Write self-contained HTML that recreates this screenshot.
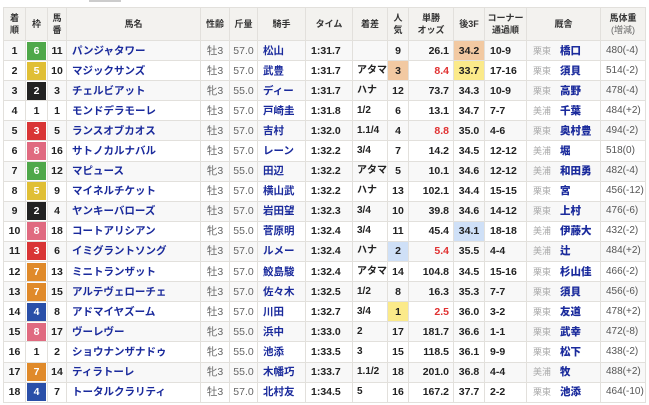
<!DOCTYPE html>
<html><head><meta charset="utf-8"><style>
*{margin:0;padding:0;box-sizing:border-box}
body{width:649px;height:405px;background:#fff;overflow:hidden;font-family:"Liberation Sans","Noto Sans CJK JP",sans-serif;color:#222;position:relative}
.tab{position:absolute;left:89px;top:0;width:32px;height:2px;background:#ccc}
table{position:absolute;left:3px;top:7px;width:643px;border-collapse:collapse;table-layout:fixed;font-size:10.5px}
td,th{border:1px solid #e2e0dc;padding:0;text-align:center;white-space:nowrap;overflow:hidden}
th{background:#f3f2ef;font-size:9px;font-weight:bold;color:#333;line-height:12px;height:33px}
th small{font-weight:normal;color:#666;font-size:9px}
tr.r{height:20.1px}
tr.r td{height:20.1px}
tr.r:nth-child(even) td{background:#f8f8f8}
td{font-weight:bold;line-height:14px}
td.n{text-align:left;padding-left:5px;color:#1a2a9c}
td.g{color:#666;font-weight:normal}
td.j{text-align:left;padding-left:5px;color:#1a2a9c}
td.l{text-align:left;padding-left:5px}
td.k{text-align:left;padding-left:4px;font-size:10px}
td.rt{text-align:right;padding-right:4px}
td.red{color:#e03030}
td.w{text-align:left;padding-left:5px;color:#555;font-weight:normal;font-size:10px}
td.s{text-align:left;padding-left:6px}
td.s span{color:#aaa;font-weight:normal;font-size:9px;margin-right:9px}
td.s b{color:#1a2a9c}
tr.r td.f{padding:0 1px;background:#fff}
.f div{height:18px;line-height:18px;color:#fff;font-weight:bold}
.c1{background:#fff;color:#222!important}
.c2{background:#222}.c3{background:#d93535}.c4{background:#2a4fa8}
.c5{background:#e0bf35}.c6{background:#4fa84a}.c7{background:#e08a2a}.c8{background:#e06a80}
tr.r td.ho{background:#f2c9a2!important}
tr.r td.hy{background:#fbea8a!important}
tr.r td.hb{background:#cfe0f7!important}
</style></head><body>
<div class="tab"></div>
<table>
<colgroup>
<col style="width:22px"><col style="width:22px"><col style="width:19px"><col style="width:134px"><col style="width:29px"><col style="width:28px"><col style="width:48px"><col style="width:47px"><col style="width:35px"><col style="width:21px"><col style="width:45px"><col style="width:31px"><col style="width:42px"><col style="width:74px"><col style="width:45px">
</colgroup>
<tr><th>着<br>順</th><th>枠</th><th>馬<br>番</th><th>馬名</th><th>性齢</th><th>斤量</th><th>騎手</th><th>タイム</th><th>着差</th><th>人<br>気</th><th>単勝<br>オッズ</th><th>後3F</th><th>コーナー<br>通過順</th><th>厩舎</th><th>馬体重<br><small>(増減)</small></th></tr>
<tr class="r"><td>1</td><td class="f"><div class="c6">6</div></td><td>11</td><td class="n">パンジャタワー</td><td class="g">牡3</td><td class="g">57.0</td><td class="j">松山</td><td class="l">1:31.7</td><td class="k"></td><td>9</td><td class="rt">26.1</td><td class="ho">34.2</td><td class="l">10-9</td><td class="s"><span>栗東</span><b>橋口</b></td><td class="w">480(-4)</td></tr>
<tr class="r"><td>2</td><td class="f"><div class="c5">5</div></td><td>10</td><td class="n">マジックサンズ</td><td class="g">牡3</td><td class="g">57.0</td><td class="j">武豊</td><td class="l">1:31.7</td><td class="k">アタマ</td><td class="ho">3</td><td class="rt red">8.4</td><td class="hy">33.7</td><td class="l">17-16</td><td class="s"><span>栗東</span><b>須貝</b></td><td class="w">514(-2)</td></tr>
<tr class="r"><td>3</td><td class="f"><div class="c2">2</div></td><td>3</td><td class="n">チェルビアット</td><td class="g">牝3</td><td class="g">55.0</td><td class="j">ディー</td><td class="l">1:31.7</td><td class="k">ハナ</td><td>12</td><td class="rt">73.7</td><td>34.3</td><td class="l">10-9</td><td class="s"><span>栗東</span><b>高野</b></td><td class="w">478(-4)</td></tr>
<tr class="r"><td>4</td><td class="f"><div class="c1">1</div></td><td>1</td><td class="n">モンドデラモーレ</td><td class="g">牡3</td><td class="g">57.0</td><td class="j">戸崎圭</td><td class="l">1:31.8</td><td class="k">1/2</td><td>6</td><td class="rt">13.1</td><td>34.7</td><td class="l">7-7</td><td class="s"><span>美浦</span><b>千葉</b></td><td class="w">484(+2)</td></tr>
<tr class="r"><td>5</td><td class="f"><div class="c3">3</div></td><td>5</td><td class="n">ランスオブカオス</td><td class="g">牡3</td><td class="g">57.0</td><td class="j">吉村</td><td class="l">1:32.0</td><td class="k">1.1/4</td><td>4</td><td class="rt red">8.8</td><td>35.0</td><td class="l">4-6</td><td class="s"><span>栗東</span><b>奥村豊</b></td><td class="w">494(-2)</td></tr>
<tr class="r"><td>6</td><td class="f"><div class="c8">8</div></td><td>16</td><td class="n">サトノカルナバル</td><td class="g">牡3</td><td class="g">57.0</td><td class="j">レーン</td><td class="l">1:32.2</td><td class="k">3/4</td><td>7</td><td class="rt">14.2</td><td>34.5</td><td class="l">12-12</td><td class="s"><span>美浦</span><b>堀</b></td><td class="w">518(0)</td></tr>
<tr class="r"><td>7</td><td class="f"><div class="c6">6</div></td><td>12</td><td class="n">マピュース</td><td class="g">牝3</td><td class="g">55.0</td><td class="j">田辺</td><td class="l">1:32.2</td><td class="k">アタマ</td><td>5</td><td class="rt">10.1</td><td>34.6</td><td class="l">12-12</td><td class="s"><span>美浦</span><b>和田勇</b></td><td class="w">482(-4)</td></tr>
<tr class="r"><td>8</td><td class="f"><div class="c5">5</div></td><td>9</td><td class="n">マイネルチケット</td><td class="g">牡3</td><td class="g">57.0</td><td class="j">横山武</td><td class="l">1:32.2</td><td class="k">ハナ</td><td>13</td><td class="rt">102.1</td><td>34.4</td><td class="l">15-15</td><td class="s"><span>栗東</span><b>宮</b></td><td class="w">456(-12)</td></tr>
<tr class="r"><td>9</td><td class="f"><div class="c2">2</div></td><td>4</td><td class="n">ヤンキーバローズ</td><td class="g">牡3</td><td class="g">57.0</td><td class="j">岩田望</td><td class="l">1:32.3</td><td class="k">3/4</td><td>10</td><td class="rt">39.8</td><td>34.6</td><td class="l">14-12</td><td class="s"><span>栗東</span><b>上村</b></td><td class="w">476(-6)</td></tr>
<tr class="r"><td>10</td><td class="f"><div class="c8">8</div></td><td>18</td><td class="n">コートアリシアン</td><td class="g">牝3</td><td class="g">55.0</td><td class="j">菅原明</td><td class="l">1:32.4</td><td class="k">3/4</td><td>11</td><td class="rt">45.4</td><td class="hb">34.1</td><td class="l">18-18</td><td class="s"><span>美浦</span><b>伊藤大</b></td><td class="w">432(-2)</td></tr>
<tr class="r"><td>11</td><td class="f"><div class="c3">3</div></td><td>6</td><td class="n">イミグラントソング</td><td class="g">牡3</td><td class="g">57.0</td><td class="j">ルメー</td><td class="l">1:32.4</td><td class="k">ハナ</td><td class="hb">2</td><td class="rt red">5.4</td><td>35.5</td><td class="l">4-4</td><td class="s"><span>美浦</span><b>辻</b></td><td class="w">484(+2)</td></tr>
<tr class="r"><td>12</td><td class="f"><div class="c7">7</div></td><td>13</td><td class="n">ミニトランザット</td><td class="g">牡3</td><td class="g">57.0</td><td class="j">鮫島駿</td><td class="l">1:32.4</td><td class="k">アタマ</td><td>14</td><td class="rt">104.8</td><td>34.5</td><td class="l">15-16</td><td class="s"><span>栗東</span><b>杉山佳</b></td><td class="w">466(-2)</td></tr>
<tr class="r"><td>13</td><td class="f"><div class="c7">7</div></td><td>15</td><td class="n">アルテヴェローチェ</td><td class="g">牡3</td><td class="g">57.0</td><td class="j">佐々木</td><td class="l">1:32.5</td><td class="k">1/2</td><td>8</td><td class="rt">16.3</td><td>35.3</td><td class="l">7-7</td><td class="s"><span>栗東</span><b>須貝</b></td><td class="w">456(-6)</td></tr>
<tr class="r"><td>14</td><td class="f"><div class="c4">4</div></td><td>8</td><td class="n">アドマイヤズーム</td><td class="g">牡3</td><td class="g">57.0</td><td class="j">川田</td><td class="l">1:32.7</td><td class="k">3/4</td><td class="hy">1</td><td class="rt red">2.5</td><td>36.0</td><td class="l">3-2</td><td class="s"><span>栗東</span><b>友道</b></td><td class="w">478(+2)</td></tr>
<tr class="r"><td>15</td><td class="f"><div class="c8">8</div></td><td>17</td><td class="n">ヴーレヴー</td><td class="g">牝3</td><td class="g">55.0</td><td class="j">浜中</td><td class="l">1:33.0</td><td class="k">2</td><td>17</td><td class="rt">181.7</td><td>36.6</td><td class="l">1-1</td><td class="s"><span>栗東</span><b>武幸</b></td><td class="w">472(-8)</td></tr>
<tr class="r"><td>16</td><td class="f"><div class="c1">1</div></td><td>2</td><td class="n">ショウナンザナドゥ</td><td class="g">牝3</td><td class="g">55.0</td><td class="j">池添</td><td class="l">1:33.5</td><td class="k">3</td><td>15</td><td class="rt">118.5</td><td>36.1</td><td class="l">9-9</td><td class="s"><span>栗東</span><b>松下</b></td><td class="w">438(-2)</td></tr>
<tr class="r"><td>17</td><td class="f"><div class="c7">7</div></td><td>14</td><td class="n">ティラトーレ</td><td class="g">牝3</td><td class="g">55.0</td><td class="j">木幡巧</td><td class="l">1:33.7</td><td class="k">1.1/2</td><td>18</td><td class="rt">201.0</td><td>36.8</td><td class="l">4-4</td><td class="s"><span>美浦</span><b>牧</b></td><td class="w">488(+2)</td></tr>
<tr class="r"><td>18</td><td class="f"><div class="c4">4</div></td><td>7</td><td class="n">トータルクラリティ</td><td class="g">牡3</td><td class="g">57.0</td><td class="j">北村友</td><td class="l">1:34.5</td><td class="k">5</td><td>16</td><td class="rt">167.2</td><td>37.7</td><td class="l">2-2</td><td class="s"><span>栗東</span><b>池添</b></td><td class="w">464(-10)</td></tr>
</table>
</body></html>
